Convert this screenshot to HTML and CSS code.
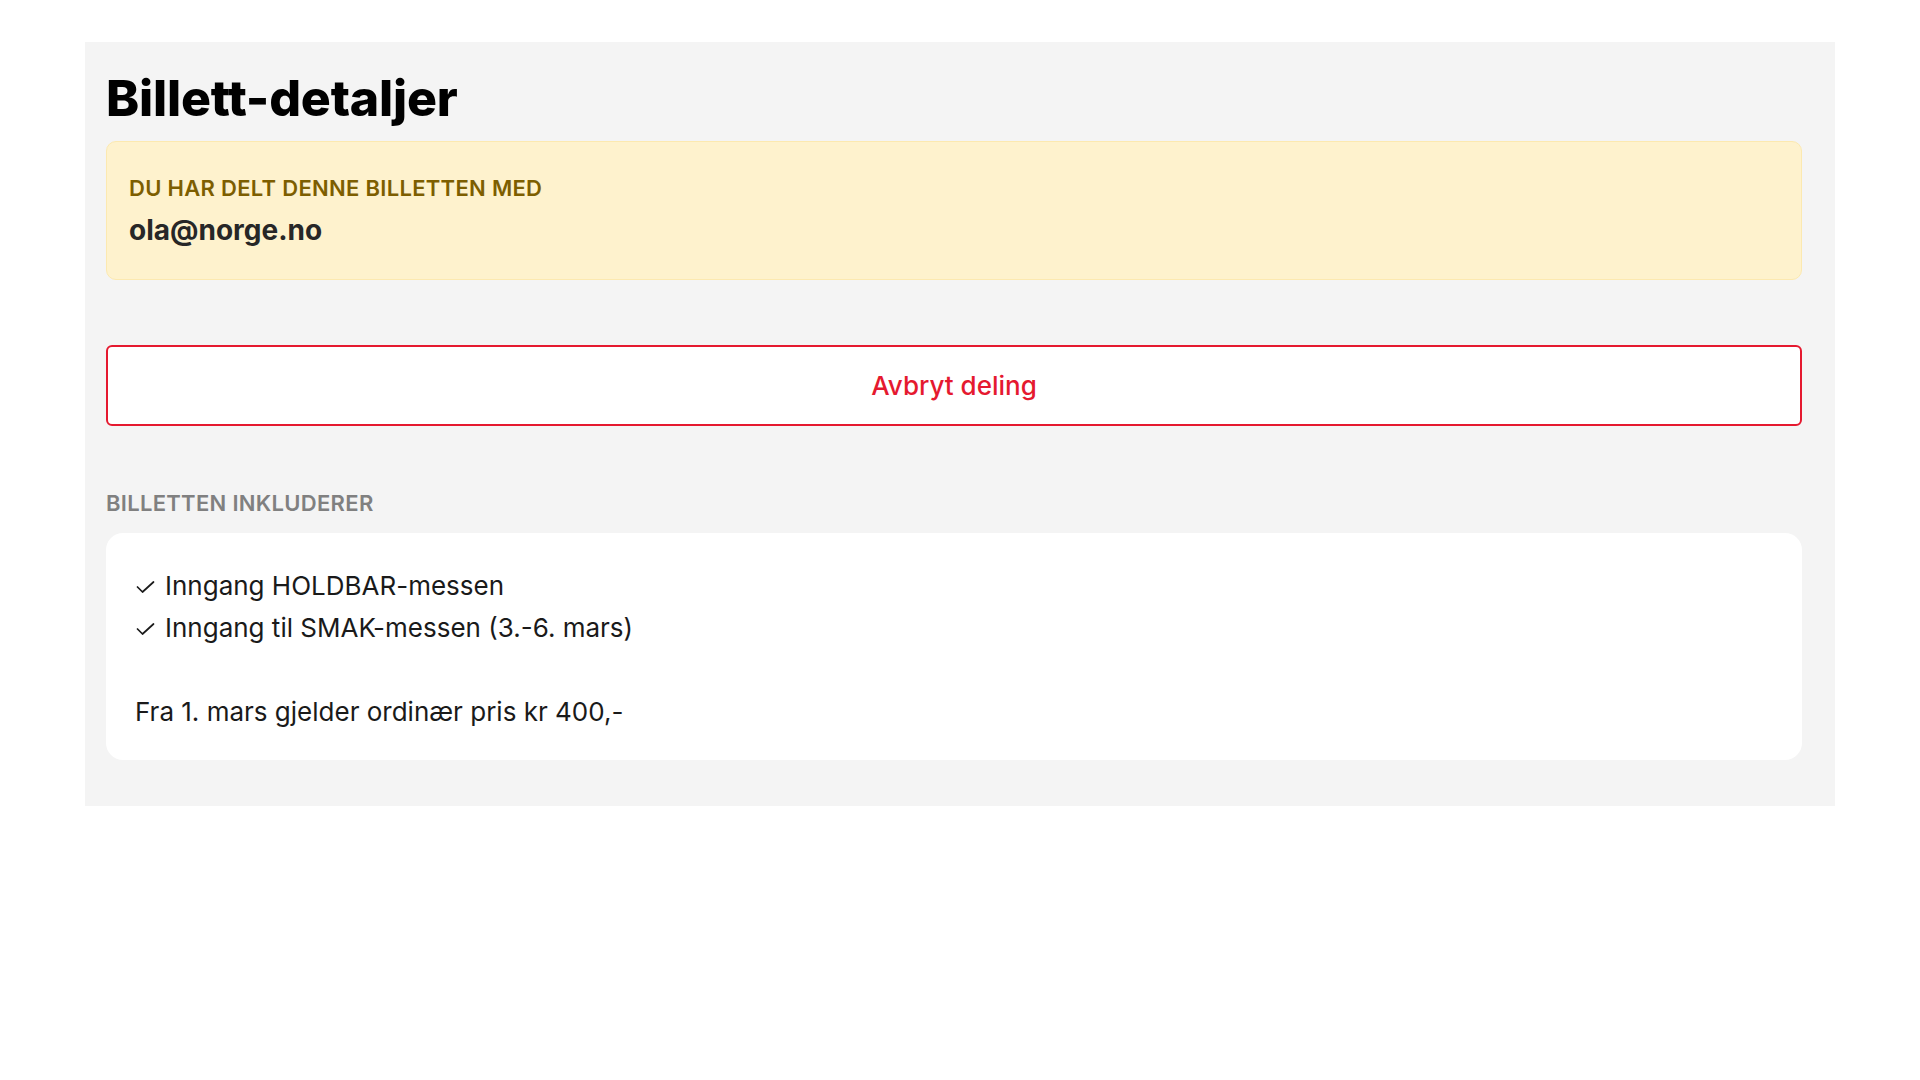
FILE: index.html
```html
<!DOCTYPE html>
<html lang="no">
<head>
<meta charset="utf-8">
<title>Billett-detaljer</title>
<link rel="stylesheet" href="styles.css">
</head>
<body>
<div class="page">
  <main class="panel">
    <h1 class="title">Billett-detaljer</h1>
    <section class="shared">
      <div class="shared-label">DU HAR DELT DENNE BILLETTEN MED</div>
      <div class="shared-email">ola@norge.no</div>
    </section>
    <button class="cancel" type="button">Avbryt deling</button>
    <h2 class="section-label">BILLETTEN INKLUDERER</h2>
    <section class="card">
      <ul class="includes">
        <li><svg class="check" viewBox="0 0 19 12" width="19" height="12" aria-hidden="true"><polyline points="1.5,6 6.5,11 17.5,1" fill="none" stroke="#1a1a1a" stroke-width="1.7" stroke-linecap="round" stroke-linejoin="round"/></svg>Inngang HOLDBAR-messen</li>
        <li><svg class="check" viewBox="0 0 19 12" width="19" height="12" aria-hidden="true"><polyline points="1.5,6 6.5,11 17.5,1" fill="none" stroke="#1a1a1a" stroke-width="1.7" stroke-linecap="round" stroke-linejoin="round"/></svg>Inngang til SMAK-messen (3.-6. mars)</li>
      </ul>
      <p class="note">Fra 1. mars gjelder ordinær pris kr 400,-</p>
    </section>
  </main>
</div>
</body>
</html>
```

FILE: styles.css
```css
* { box-sizing: border-box; }

html, body {
  margin: 0;
  padding: 0;
  background: #ffffff;
  font-family: Inter, "Noto Sans", "Liberation Sans", sans-serif;
  color: #1a1a1a;
}

.page {
  padding: 42px 85px 0 85px;
}

.panel {
  background: #f4f4f4;
  padding: 27px 33px 46px 21px;
  display: flex;
  flex-direction: column;
}

.title {
  margin: 0 0 14px 0;
  font-size: 50px;
  line-height: 58px;
  font-weight: 800;
  color: #000000;
  letter-spacing: -0.2px;
}

.shared {
  background: #fef2cd;
  border: 1px solid #fce9b0;
  border-radius: 10px;
  padding: 32px 22px 32px 22px;
}

.shared-label {
  font-size: 22px;
  line-height: 28px;
  font-weight: 600;
  color: #7d5e00;
  letter-spacing: 0.3px;
}

.shared-email {
  margin-top: 11px;
  font-size: 28px;
  line-height: 34px;
  font-weight: 700;
  color: #272727;
}

.cancel {
  margin-top: 65px;
  height: 81px;
  width: 100%;
  background: #ffffff;
  border: 2px solid #e5192f;
  border-radius: 6px;
  color: #e5192f;
  font-family: inherit;
  font-size: 26px;
  font-weight: 500;
  padding: 0;
}

.section-label {
  margin: 63px 0 16px 0;
  font-size: 22px;
  line-height: 28px;
  font-weight: 600;
  color: #808080;
  letter-spacing: 0.3px;
}

.card {
  background: #ffffff;
  border-radius: 17px;
  padding: 32px 29px 27px 29px;
}

.includes {
  list-style: none;
  margin: 0;
  padding: 0;
}

.includes li {
  display: flex;
  align-items: center;
  font-size: 26px;
  line-height: 42px;
}

.check {
  flex: none;
  margin: 2px 10px 0 1px;
}

.note {
  margin: 42px 0 0 0;
  font-size: 26px;
  line-height: 42px;
}
```
